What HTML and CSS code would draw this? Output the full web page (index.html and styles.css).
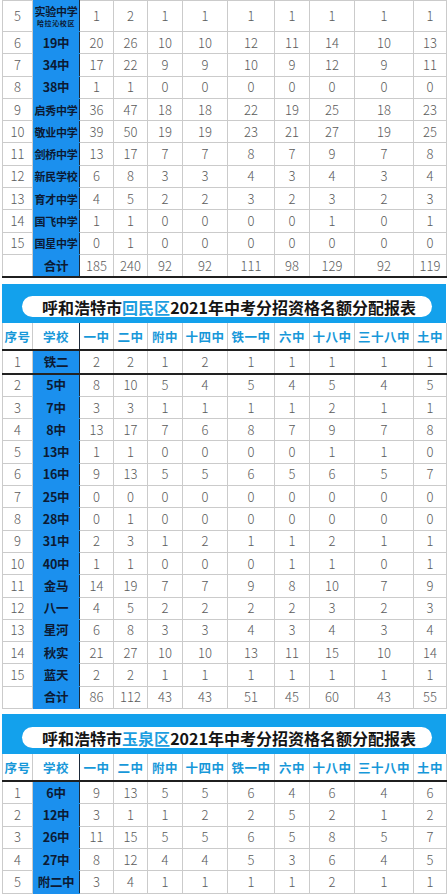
FILE: index.html
```html
<!DOCTYPE html>
<html lang="zh-CN">
<head>
<meta charset="utf-8">
<title>名额分配报表</title>
<link rel="stylesheet" href="styles.css">
</head>
<body>
<div class="sheet">

<table class="grid first">
<colgroup><col class="c0"><col class="c1"><col class="c2"><col class="c3"><col class="c4"><col class="c5"><col class="c6"><col class="c7"><col class="c8"><col class="c9"><col class="c10"></colgroup>
<tbody>
<tr class="tall"><td>5</td><td class="sch"><span class="nm4">实验中学</span><span class="sub">哈拉沁校区</span></td><td>1</td><td>2</td><td>1</td><td>1</td><td>1</td><td>1</td><td>1</td><td>1</td><td>1</td></tr>
<tr><td>6</td><td class="sch">19中</td><td>20</td><td>26</td><td>10</td><td>10</td><td>12</td><td>11</td><td>14</td><td>10</td><td>13</td></tr>
<tr><td>7</td><td class="sch">34中</td><td>17</td><td>22</td><td>9</td><td>9</td><td>10</td><td>9</td><td>12</td><td>9</td><td>11</td></tr>
<tr><td>8</td><td class="sch">38中</td><td>1</td><td>1</td><td>0</td><td>0</td><td>0</td><td>0</td><td>0</td><td>0</td><td>0</td></tr>
<tr><td>9</td><td class="sch nm4">启秀中学</td><td>36</td><td>47</td><td>18</td><td>18</td><td>22</td><td>19</td><td>25</td><td>18</td><td>23</td></tr>
<tr><td>10</td><td class="sch nm4">敬业中学</td><td>39</td><td>50</td><td>19</td><td>19</td><td>23</td><td>21</td><td>27</td><td>19</td><td>25</td></tr>
<tr><td>11</td><td class="sch nm4">剑桥中学</td><td>13</td><td>17</td><td>7</td><td>7</td><td>8</td><td>7</td><td>9</td><td>7</td><td>8</td></tr>
<tr><td>12</td><td class="sch nm4">新民学校</td><td>6</td><td>8</td><td>3</td><td>3</td><td>4</td><td>3</td><td>4</td><td>3</td><td>4</td></tr>
<tr><td>13</td><td class="sch nm4">育才中学</td><td>4</td><td>5</td><td>2</td><td>2</td><td>3</td><td>2</td><td>3</td><td>2</td><td>3</td></tr>
<tr><td>14</td><td class="sch nm4">国飞中学</td><td>1</td><td>1</td><td>0</td><td>0</td><td>0</td><td>0</td><td>1</td><td>0</td><td>1</td></tr>
<tr><td>15</td><td class="sch nm4">国星中学</td><td>0</td><td>1</td><td>0</td><td>0</td><td>0</td><td>0</td><td>0</td><td>0</td><td>0</td></tr>
<tr class="total"><td></td><td class="sch">合计</td><td>185</td><td>240</td><td>92</td><td>92</td><td>111</td><td>98</td><td>129</td><td>92</td><td>119</td></tr>
</tbody>
</table>

<section class="block">
<div class="band"><div class="pill"><h2>呼和浩特市<span class="hl">回民区</span>2021年中考分招资格名额分配报表</h2></div></div>
<table class="grid">
<colgroup><col class="c0"><col class="c1"><col class="c2"><col class="c3"><col class="c4"><col class="c5"><col class="c6"><col class="c7"><col class="c8"><col class="c9"><col class="c10"></colgroup>
<thead>
<tr class="head"><th>序号</th><th class="hsch">学校</th><th>一中</th><th>二中</th><th>附中</th><th>十四中</th><th>铁一中</th><th>六中</th><th>十八中</th><th>三十八中</th><th>土中</th></tr>
</thead>
<tbody>
<tr class="sep"><td>1</td><td class="sch">铁二</td><td>2</td><td>2</td><td>1</td><td>2</td><td>1</td><td>1</td><td>1</td><td>1</td><td>1</td></tr>
<tr><td>2</td><td class="sch">5中</td><td>8</td><td>10</td><td>5</td><td>4</td><td>5</td><td>4</td><td>5</td><td>4</td><td>5</td></tr>
<tr><td>3</td><td class="sch">7中</td><td>3</td><td>3</td><td>1</td><td>1</td><td>1</td><td>1</td><td>2</td><td>1</td><td>1</td></tr>
<tr><td>4</td><td class="sch">8中</td><td>13</td><td>17</td><td>7</td><td>6</td><td>8</td><td>7</td><td>9</td><td>7</td><td>8</td></tr>
<tr><td>5</td><td class="sch">13中</td><td>1</td><td>1</td><td>0</td><td>0</td><td>0</td><td>0</td><td>1</td><td>1</td><td>0</td></tr>
<tr><td>6</td><td class="sch">16中</td><td>9</td><td>13</td><td>5</td><td>5</td><td>6</td><td>5</td><td>6</td><td>5</td><td>7</td></tr>
<tr><td>7</td><td class="sch">25中</td><td>0</td><td>0</td><td>0</td><td>0</td><td>0</td><td>0</td><td>0</td><td>0</td><td>0</td></tr>
<tr><td>8</td><td class="sch">28中</td><td>0</td><td>1</td><td>0</td><td>0</td><td>0</td><td>0</td><td>0</td><td>0</td><td>0</td></tr>
<tr><td>9</td><td class="sch">31中</td><td>2</td><td>3</td><td>1</td><td>2</td><td>1</td><td>1</td><td>2</td><td>1</td><td>1</td></tr>
<tr><td>10</td><td class="sch">40中</td><td>1</td><td>1</td><td>0</td><td>0</td><td>0</td><td>1</td><td>1</td><td>0</td><td>1</td></tr>
<tr><td>11</td><td class="sch">金马</td><td>14</td><td>19</td><td>7</td><td>7</td><td>9</td><td>8</td><td>10</td><td>7</td><td>9</td></tr>
<tr><td>12</td><td class="sch">八一</td><td>4</td><td>5</td><td>2</td><td>2</td><td>2</td><td>2</td><td>3</td><td>2</td><td>3</td></tr>
<tr><td>13</td><td class="sch">星河</td><td>6</td><td>8</td><td>3</td><td>3</td><td>4</td><td>3</td><td>4</td><td>3</td><td>4</td></tr>
<tr><td>14</td><td class="sch">秋实</td><td>21</td><td>27</td><td>10</td><td>10</td><td>13</td><td>11</td><td>15</td><td>10</td><td>14</td></tr>
<tr><td>15</td><td class="sch">蓝天</td><td>2</td><td>2</td><td>1</td><td>1</td><td>1</td><td>1</td><td>1</td><td>1</td><td>1</td></tr>
<tr><td></td><td class="sch">合计</td><td>86</td><td>112</td><td>43</td><td>43</td><td>51</td><td>45</td><td>60</td><td>43</td><td>55</td></tr>
</tbody>
</table>
</section>

<section class="block third">
<div class="band"><div class="pill"><h2>呼和浩特市<span class="hl">玉泉区</span>2021年中考分招资格名额分配报表</h2></div></div>
<table class="grid">
<colgroup><col class="c0"><col class="c1"><col class="c2"><col class="c3"><col class="c4"><col class="c5"><col class="c6"><col class="c7"><col class="c8"><col class="c9"><col class="c10"></colgroup>
<thead>
<tr class="head"><th>序号</th><th class="hsch">学校</th><th>一中</th><th>二中</th><th>附中</th><th>十四中</th><th>铁一中</th><th>六中</th><th>十八中</th><th>三十八中</th><th>土中</th></tr>
</thead>
<tbody>
<tr><td>1</td><td class="sch">6中</td><td>9</td><td>13</td><td>5</td><td>5</td><td>6</td><td>4</td><td>6</td><td>4</td><td>6</td></tr>
<tr><td>2</td><td class="sch">12中</td><td>3</td><td>1</td><td>1</td><td>2</td><td>2</td><td>5</td><td>2</td><td>1</td><td>2</td></tr>
<tr><td>3</td><td class="sch">26中</td><td>11</td><td>15</td><td>5</td><td>5</td><td>6</td><td>5</td><td>8</td><td>5</td><td>7</td></tr>
<tr><td>4</td><td class="sch">27中</td><td>8</td><td>12</td><td>4</td><td>4</td><td>5</td><td>3</td><td>6</td><td>4</td><td>5</td></tr>
<tr><td>5</td><td class="sch">附二中</td><td>3</td><td>4</td><td>1</td><td>1</td><td>1</td><td>1</td><td>2</td><td>1</td><td>1</td></tr>
</tbody>
</table>
</section>

</div>
</body>
</html>
```

FILE: styles.css
```css
html, body {
  margin: 0;
  padding: 0;
  background: #fff;
}
body {
  width: 448px;
  height: 894px;
  overflow: hidden;
  font-family: "Noto Sans CJK SC", "Noto Sans", sans-serif;
}
.sheet {
  padding-left: 2px;
  width: 444px;
}
.grid {
  table-layout: fixed;
  border-collapse: collapse;
  width: 444px;
}
.c0 { width: 30px; }
.c1 { width: 47px; }
.c2 { width: 34px; }
.c3 { width: 34px; }
.c4 { width: 35px; }
.c5 { width: 45px; }
.c6 { width: 47px; }
.c7 { width: 35px; }
.c8 { width: 45px; }
.c9 { width: 59px; }
.c10 { width: 33px; }

.grid td {
  height: 21.3px;
  padding: 0;
  text-align: center;
  vertical-align: middle;
  font-size: 13px;
  font-weight: 300;
  line-height: 14px;
  color: #5a5a5a;
  border: 1px solid #cbcbcb;
  white-space: nowrap;
}
.grid tr.tall td {
  height: 30px;
}
.grid td.sch {
  background: #1b90ee;
  color: #0c1a33;
  font-weight: 700;
  font-size: 12.5px;
  border-left: 1px solid #1d2a3a;
  border-right: 1px solid #1d2a3a;
  border-top-color: #1b90ee;
  border-bottom-color: #1b90ee;
  letter-spacing: -0.3px;
}
.grid td.nm4 {
  font-size: 11px;
  letter-spacing: -0.2px;
}
.grid td.sch .nm4 {
  display: block;
  font-size: 11px;
  line-height: 13px;
}
.grid td.sch .sub {
  display: block;
  font-size: 7px;
  line-height: 10px;
  letter-spacing: 0.6px;
}
.first tr.total td {
  border-bottom: 2px solid #1f1f1f;
}

.block {
  margin-top: 6px;
}
.block.third {
  margin-top: 5px;
}
.band {
  background: #13a1ec;
  padding: 12px 14px 6px 20px;
}
.third .band {
  padding: 13px 14px 6px 20px;
}
.pill {
  background: #fff;
  border-radius: 11px;
  height: 21px;
  display: flex;
  align-items: center;
  justify-content: center;
}
.pill h2 {
  margin: 0;
  font-size: 16px;
  font-weight: 700;
  line-height: 20px;
  color: #141414;
  white-space: nowrap;
  padding-left: 4px;
}
.pill .hl {
  color: #1d9ee0;
}

.grid th {
  height: 26px;
  padding: 0;
  text-align: center;
  vertical-align: middle;
  font-size: 12.5px;
  font-weight: 700;
  color: #1798d9;
  letter-spacing: 0.5px;
  background: #fff;
  border: 1px solid #cbcbcb;
  border-top: none;
  border-bottom: 2px solid #1f1f1f;
  white-space: nowrap;
}
.grid th.hsch {
  border-left: 1px solid #cbcbcb;
  border-right: 1px solid #1d2a3a;
}
.grid tr.sep td {
  border-bottom: 2px solid #222;
}
```
